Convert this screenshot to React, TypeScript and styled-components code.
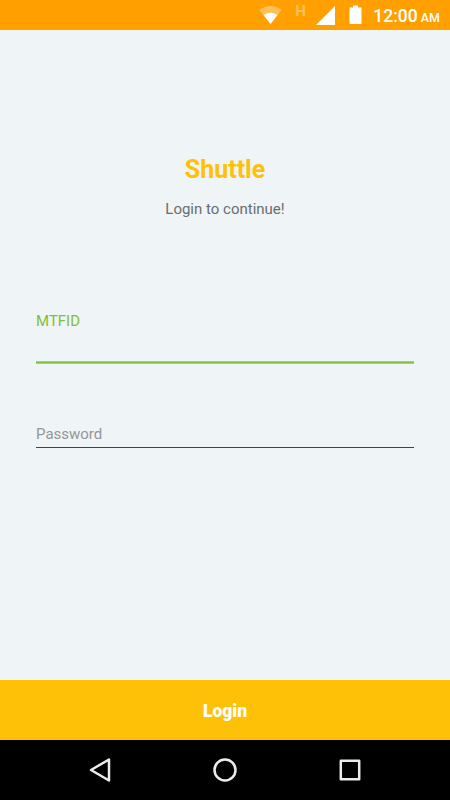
import React from 'react';
import styled, { createGlobalStyle } from 'styled-components';

const GlobalStyle = createGlobalStyle`
  * { box-sizing: border-box; }
  body { margin: 0; font-family: Roboto, sans-serif; }
`;

const Screen = styled.div`
  width: 450px;
  height: 800px;
  display: flex;
  flex-direction: column;
  background: #eff4f6;
  overflow: hidden;
`;

const StatusBar = styled.header`
  height: 30px;
  background: #ffa000;
  color: #fff;
  display: flex;
  justify-content: space-between;
  padding: 0 10px 0 256px;
`;

const StatusIcons = styled.svg`
  width: 114px;
  height: 30px;
  display: block;
  flex: none;
`;

const NetworkLabel = styled.text`
  font: 700 15px Roboto, sans-serif;
  fill: #ffc15a;
`;

const Clock = styled.time`
  font-size: 17.5px;
  font-weight: 500;
  line-height: 32px;
  white-space: nowrap;
`;

const Meridiem = styled.span`
  font-size: 12.5px;
  margin-left: 3px;
`;

const Content = styled.main`
  flex: 1;
  display: flex;
  flex-direction: column;
  padding: 122px 36px 0;
`;

const Title = styled.h1`
  margin: 0;
  font-size: 25px;
  line-height: 36px;
  font-weight: 700;
  text-align: center;
  color: #ffc107;
`;

const Subtitle = styled.p`
  margin: 11px 0 0;
  font-size: 15px;
  line-height: 20px;
  text-align: center;
  color: #6a6d6f;
`;

const Field = styled.label<{ $active?: boolean }>`
  display: block;
  height: ${p => (p.$active ? 53 : 24)}px;
  margin-top: ${p => (p.$active ? 92 : 60)}px;
  font-size: 15px;
  line-height: 20px;
  color: ${p => (p.$active ? '#82c02f' : '#939799')};
  background: ${p =>
    p.$active
      ? 'linear-gradient(#a5d178 0 1px, #82c03a 1px 2px, #a5d178 2px 3px) bottom / 100% 3px no-repeat'
      : 'linear-gradient(#414345, #414345) bottom / 100% 1px no-repeat'};
`;

const LoginButton = styled.button`
  height: 60px;
  border: 0;
  background: #ffc107;
  color: #fff;
  font: 900 17.5px Roboto, sans-serif;
  padding: 1px 0 0;
`;

const NavBar = styled.nav`
  height: 60px;
  background: #000;
  display: flex;
  justify-content: center;
  gap: 95px;
  align-items: center;
`;

const NavIcon = styled.svg`
  width: 30px;
  height: 30px;
  fill: none;
  stroke: #ececec;
  stroke-width: 2.5;
  stroke-linejoin: round;
`;

export default function App() {
  return (
    <Screen>
      <GlobalStyle />
      <StatusBar>
        <StatusIcons viewBox="256 0 114 30">
          <path d="M259.3 9.8Q270.5 2 281.7 9.8L270.5 24Z" fill="#ffc05a" />
          <path d="M263.5 15Q270.5 10.5 277.5 15L270.5 24Z" fill="#fff" />
          <NetworkLabel x="295.2" y="16">H</NetworkLabel>
          <path d="M335 6V25H316Z" fill="#fff" />
          <path d="M353 5.5h5v2h3.5V24h-12V7.5h3.5z" fill="#fff" />
        </StatusIcons>
        <Clock>12:00<Meridiem>AM</Meridiem></Clock>
      </StatusBar>
      <Content>
        <Title>Shuttle</Title>
        <Subtitle>Login to continue!</Subtitle>
        <Field $active>MTFID</Field>
        <Field>Password</Field>
      </Content>
      <LoginButton>Login</LoginButton>
      <NavBar>
        <NavIcon viewBox="85 755 30 30"><path d="M109 759.5V780.5L91 770Z" /></NavIcon>
        <NavIcon viewBox="210 755 30 30"><circle cx="225" cy="770" r="10.5" /></NavIcon>
        <NavIcon viewBox="335 755 30 30"><rect x="340.8" y="760.8" width="18.4" height="18.4" /></NavIcon>
      </NavBar>
    </Screen>
  );
}
